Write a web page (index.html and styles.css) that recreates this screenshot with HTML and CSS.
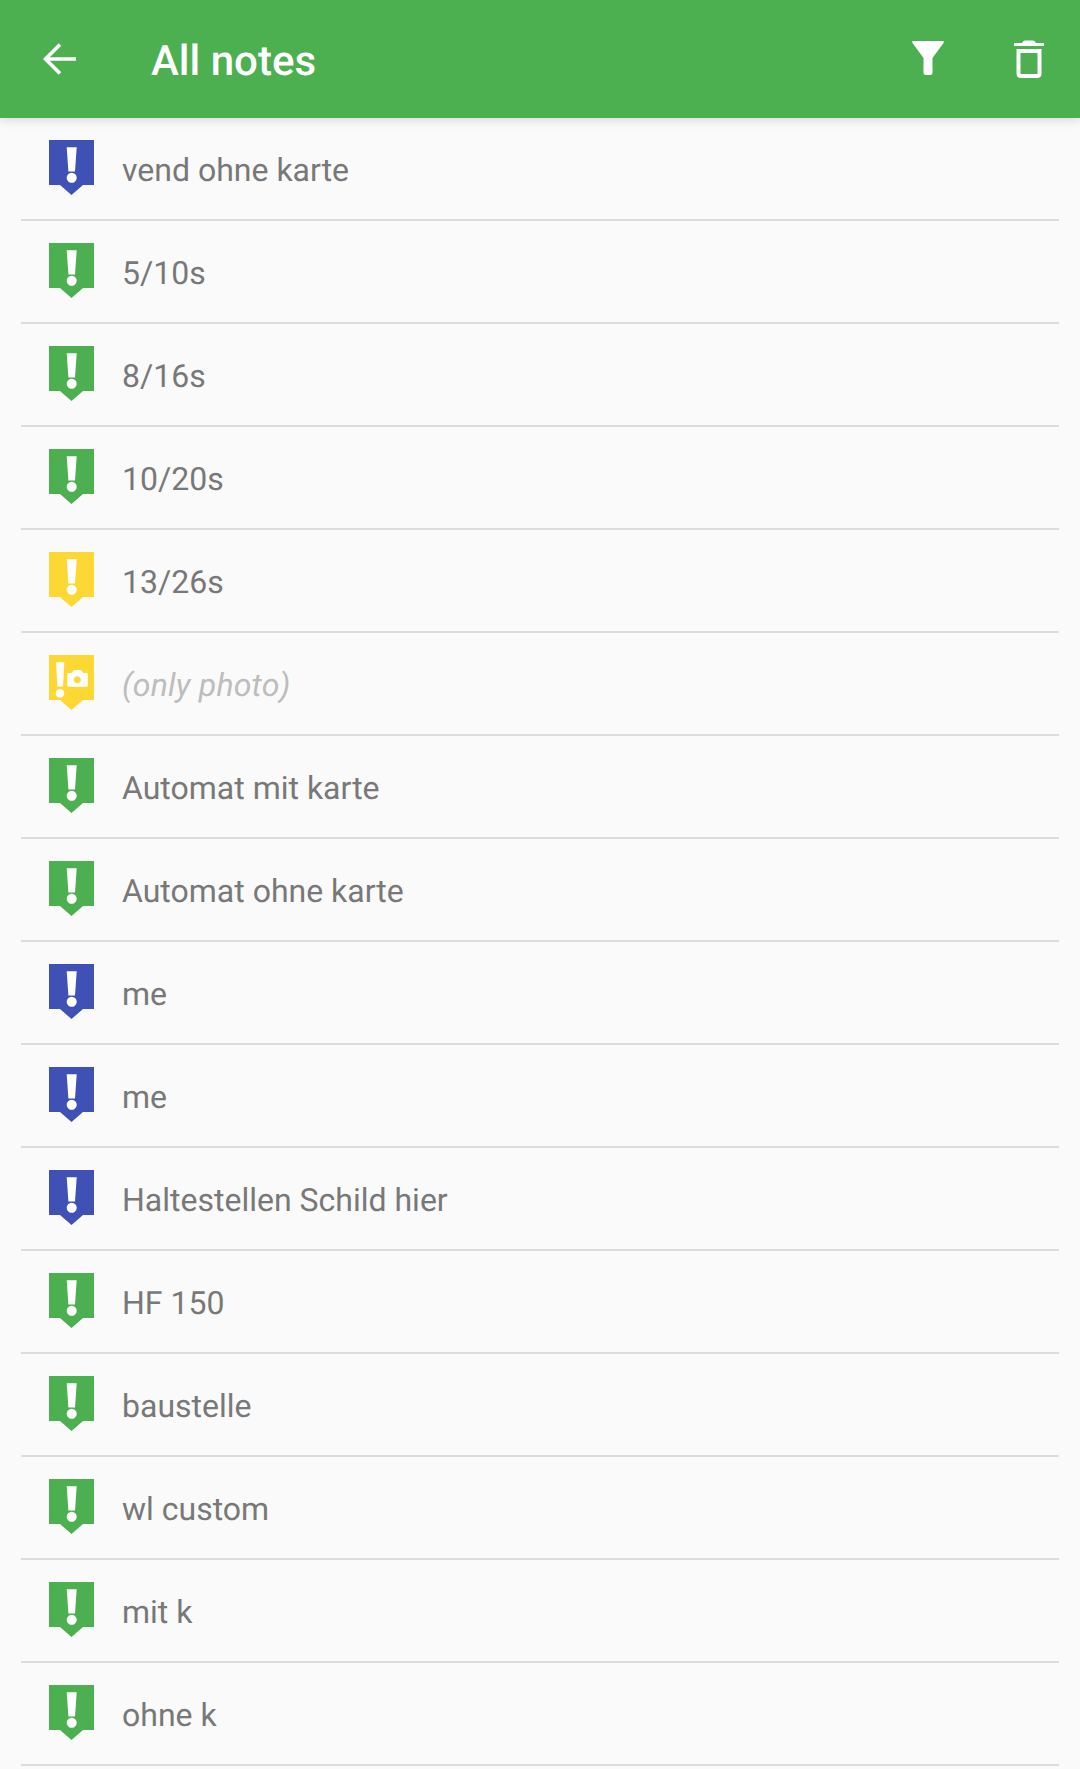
FILE: index.html
```html
<!DOCTYPE html>
<html lang="en">
<head>
<meta charset="utf-8">
<title>All notes</title>
<link rel="stylesheet" href="styles.css">
</head>
<body>
<svg class="defs" width="0" height="0" aria-hidden="true">
  <symbol id="pin" viewBox="0 0 45 55">
    <path d="M0 0H45V45H34L22.500 55L11 45H0Z" fill="currentColor"/>
    <path d="M17.700 7.300H27.700L26 31.500H19.400Z M22.700 32.800A5 5 0 1 1 22.699 32.800Z" fill="#fff"/>
  </symbol>
  <symbol id="pin-photo" viewBox="0 0 45 55">
    <path d="M0 0H45V45H34L22.500 55L11 45H0Z" fill="currentColor"/>
    <path d="M7 7.300H15.300L14 31.500H8.400Z M11 34A4.300 4.300 0 1 1 10.999 34Z" fill="#fff"/>
    <path fill-rule="evenodd" d="M19.500 18H22.500L25 15H32L34.500 18H37.500Q38.700 18 38.700 19.500V30.500Q38.700 31.700 37.500 31.700H19.500Q18.300 31.700 18.300 30.500V19.500Q18.300 18 19.500 18ZM28.300 21.200A3.500 3.500 0 1 0 28.301 21.200Z" fill="#fff"/>
  </symbol>
</svg>
<header class="appbar">
  <svg class="back" viewBox="0 0 34 34" width="34" height="34"><path d="M33 17H3M17 2.500L2.500 17L17 31.500" fill="none" stroke="#fff" stroke-width="3.600"/></svg>
  <h1 class="title">All notes</h1>
  <svg class="filter" viewBox="0 0 34 34" width="34" height="34"><path d="M2.500 0H31.500Q33.800 0 32.500 2L21.500 17V31.500Q21.500 34 19 34H15Q12.500 34 12.500 31.500V17L1.500 2Q.2 0 2.500 0Z" fill="#fff"/></svg>
  <svg class="trash" viewBox="0 0 30 38" width="30" height="38"><path d="M0 3H8Q9 .5 11 .5H19Q21 .5 22 3H30V6H0Z" fill="#fff"/><path d="M4.500 11H25.500V33.500Q25.500 36 23 36H7Q4.500 36 4.500 33.500Z" fill="none" stroke="#fff" stroke-width="4"/></svg>
</header>
<main class="list">
  <div class="row"><svg class="pin blue"><use href="#pin"/></svg><span class="label">vend ohne karte</span></div>
  <div class="row"><svg class="pin green"><use href="#pin"/></svg><span class="label">5/10s</span></div>
  <div class="row"><svg class="pin green"><use href="#pin"/></svg><span class="label">8/16s</span></div>
  <div class="row"><svg class="pin green"><use href="#pin"/></svg><span class="label">10/20s</span></div>
  <div class="row"><svg class="pin yellow"><use href="#pin"/></svg><span class="label">13/26s</span></div>
  <div class="row"><svg class="pin yellow"><use href="#pin-photo"/></svg><span class="label photo">(only photo)</span></div>
  <div class="row"><svg class="pin green"><use href="#pin"/></svg><span class="label">Automat mit karte</span></div>
  <div class="row"><svg class="pin green"><use href="#pin"/></svg><span class="label">Automat ohne karte</span></div>
  <div class="row"><svg class="pin blue"><use href="#pin"/></svg><span class="label">me</span></div>
  <div class="row"><svg class="pin blue"><use href="#pin"/></svg><span class="label">me</span></div>
  <div class="row"><svg class="pin blue"><use href="#pin"/></svg><span class="label">Haltestellen Schild hier</span></div>
  <div class="row"><svg class="pin green"><use href="#pin"/></svg><span class="label">HF 150</span></div>
  <div class="row"><svg class="pin green"><use href="#pin"/></svg><span class="label">baustelle</span></div>
  <div class="row"><svg class="pin green"><use href="#pin"/></svg><span class="label">wl custom</span></div>
  <div class="row"><svg class="pin green"><use href="#pin"/></svg><span class="label">mit k</span></div>
  <div class="row"><svg class="pin green"><use href="#pin"/></svg><span class="label">ohne k</span></div>
</main>
</body>
</html>
```
FILE: styles.css
```css
* { box-sizing: border-box; }
html, body { margin: 0; padding: 0; }
body {
  width: 1080px;
  height: 1769px;
  overflow: hidden;
  background: #fafafa;
  font-family: Roboto, "Liberation Sans", sans-serif;
  text-rendering: geometricPrecision;
}
.defs { position: absolute; }
.appbar {
  position: relative;
  z-index: 1;
  height: 118px;
  display: flex;
  align-items: center;
  background: #4caf50;
  box-shadow: 0 2px 10px rgba(0, 0, 0, 0.14);
  color: #fff;
}
.back { margin-left: 43px; flex: none; }
.title {
  margin: 5px 0 0 74px;
  flex: 1;
  font-size: 42px;
  font-weight: 500;
  line-height: 1;
}
.filter { flex: none; margin-right: 69px; margin-top: -2px; }
.trash { flex: none; margin-right: 36px; margin-top: -1px; }
.list { padding: 0 21px; }
.row {
  height: 103px;
  display: flex;
  align-items: flex-start;
  border-bottom: 2px solid #dcdcdc;
}
.pin {
  width: 45px;
  height: 55px;
  flex: none;
  margin: 22px 0 0 28px;
}
.blue { color: #3f51b5; }
.green { color: #4caf50; }
.yellow { color: #fdd835; }
.label {
  margin: 32px 0 0 28px;
  font-size: 32px;
  line-height: 40px;
  color: #787878;
}
.photo { font-style: italic; color: #bdbdbd; letter-spacing: 0.2px; }
```
